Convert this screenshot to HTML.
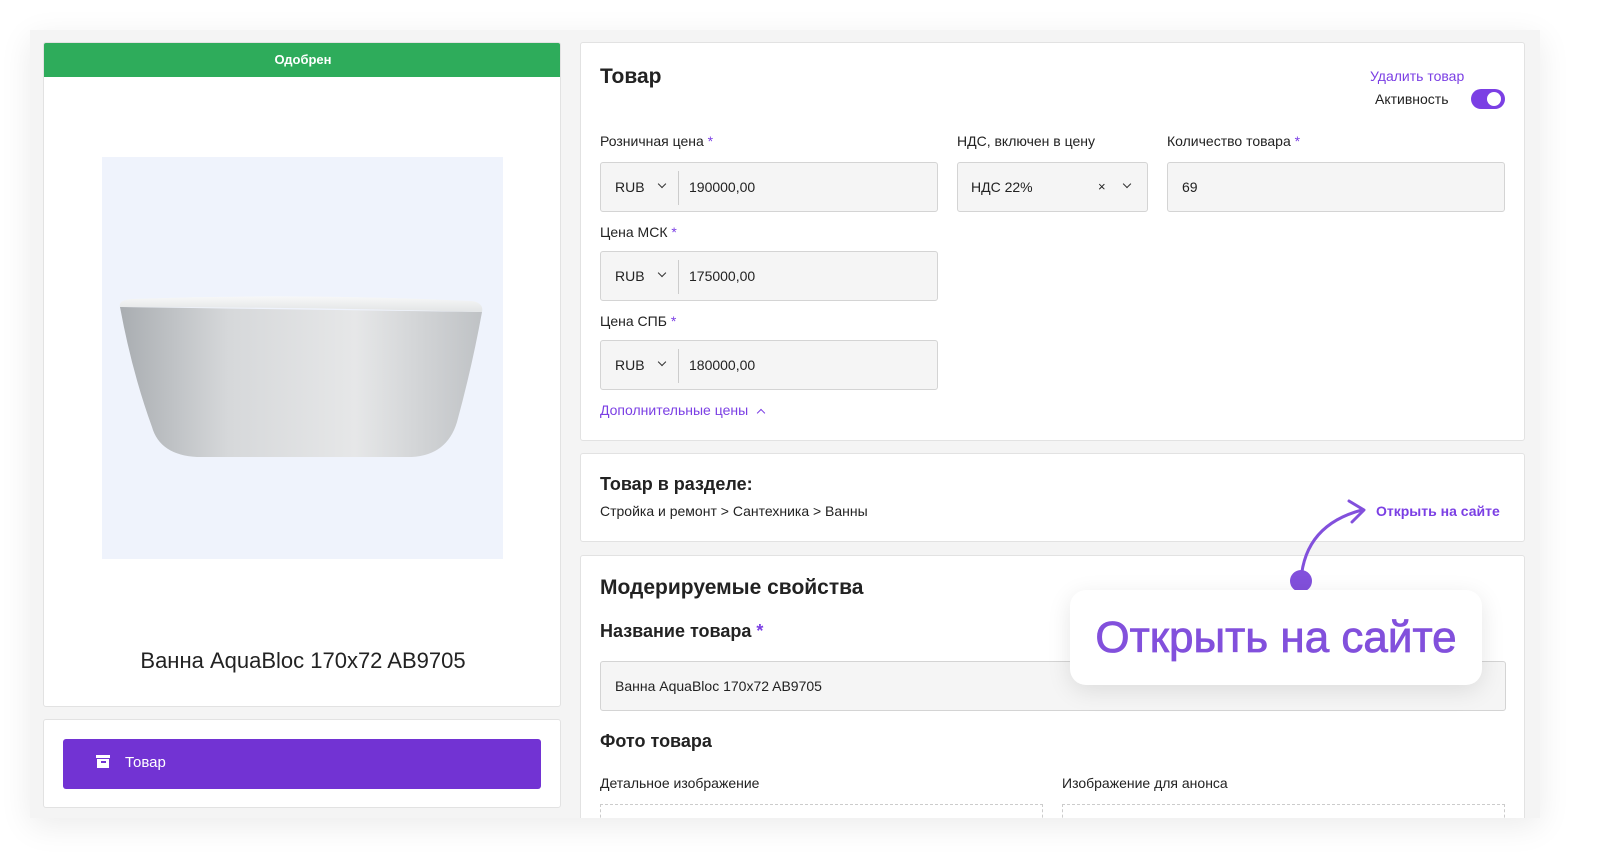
<!DOCTYPE html>
<html><head><meta charset="utf-8"><style>
*{box-sizing:border-box;margin:0;padding:0}
body{width:1600px;height:868px;background:#fff;font-family:"Liberation Sans",sans-serif;color:#222;position:relative;overflow:hidden}
.win{position:absolute;left:30px;top:30px;width:1510px;height:788px;background:#f4f4f4;box-shadow:0 8px 30px rgba(0,0,0,.08);overflow:hidden}
.card{position:absolute;background:#fff;border:1px solid #e2e2e2;border-radius:3px}
.abs{position:absolute}
.lbl{position:absolute;font-size:14px;color:#222}
.req{color:#7b3fe4}
.inp{position:absolute;background:#f5f5f5;border:1px solid #d4d4d4;border-radius:3px;height:50px;font-size:14px;color:#222}
.inp span{position:absolute;top:16px}
.chev{position:absolute;top:20px;width:6px;height:6px;border-right:1.5px solid #333;border-bottom:1.5px solid #333;transform:rotate(45deg)}
.sep{position:absolute;left:77px;top:8px;width:1px;height:34px;background:#ccc}
.purple{color:#7b3fe4}
</style></head><body>
<div class="win">
  <div class="card" style="left:13px;top:12px;width:518px;height:665px;overflow:hidden">
    <div class="abs" style="left:0;top:0;width:518px;height:34px;background:#2eac5b;color:#fff;font-size:13px;font-weight:bold;text-align:center;line-height:34px">Одобрен</div>
    <div class="abs" style="left:58px;top:114px;width:401px;height:402px;background:#eff3fc">
      <svg width="401" height="402" viewBox="0 0 401 402">
        <defs>
          <linearGradient id="g" x1="0" x2="1" y1="0" y2="0">
            <stop offset="0" stop-color="#a9adb1"/><stop offset=".3" stop-color="#d6d8da"/><stop offset=".65" stop-color="#e6e7e8"/><stop offset="1" stop-color="#bfc2c5"/>
          </linearGradient>
          <linearGradient id="r" x1="0" x2="0" y1="0" y2="1">
            <stop offset="0" stop-color="#f7f8f8"/><stop offset="1" stop-color="#e2e4e5"/>
          </linearGradient>
        </defs>
        <path d="M18 150 Q30 215 50 270 Q58 298 95 300 L310 300 Q345 298 355 265 Q370 210 380 155 Z" fill="url(#g)"/>
        <path d="M18 150 Q16 143 30 142 Q200 136 370 144 Q382 146 380 155 Q200 150 18 150 Z" fill="url(#r)"/>
      </svg>
    </div>
    <div class="abs" style="left:0;top:605px;width:518px;text-align:center;font-size:22px;color:#222">Ванна AquaBloc 170x72 AB9705</div>
  </div>
  <div class="card" style="left:13px;top:689px;width:518px;height:89px">
    <div class="abs" style="left:19px;top:19px;width:478px;height:50px;background:#7233d3;border-radius:3px;color:#fff;font-size:15px">
      <div class="abs" style="left:33px;top:16px;width:14px;height:3px;background:#fff"></div>
      <div class="abs" style="left:34px;top:20px;width:12px;height:9px;background:#fff"></div>
      <div class="abs" style="left:38px;top:22px;width:5px;height:1.5px;background:#7233d3"></div>
      <span class="abs" style="left:62px;top:15px">Товар</span>
    </div>
  </div>

  <div class="card" style="left:550px;top:12px;width:945px;height:399px">
    <div class="abs" style="left:19px;top:22px;font-size:21px;font-weight:bold">Товар</div>
    <div class="abs purple" style="left:789px;top:25px;font-size:14px">Удалить товар</div>
    <div class="abs" style="left:794px;top:48px;font-size:14px">Активность</div>
    <div class="abs" style="left:890px;top:46px;width:34px;height:20px;background:#7b3fe4;border-radius:10px"><div class="abs" style="left:16px;top:3px;width:14px;height:14px;background:#fff;border-radius:50%"></div></div>
    <div class="lbl" style="left:19px;top:90px">Розничная цена <span class="req">*</span></div>
    <div class="lbl" style="left:376px;top:90px">НДС, включен в цену</div>
    <div class="lbl" style="left:586px;top:90px">Количество товара <span class="req">*</span></div>
    <div class="inp" style="left:19px;top:119px;width:338px"><span style="left:14px">RUB</span><div class="chev" style="left:58px;top:18px"></div><div class="sep"></div><span style="left:88px">190000,00</span></div>
    <div class="inp" style="left:376px;top:119px;width:191px"><span style="left:13px">НДС 22%</span><span style="left:140px;font-size:13px">×</span><div class="chev" style="left:166px;top:18px"></div></div>
    <div class="inp" style="left:586px;top:119px;width:338px"><span style="left:14px">69</span></div>
    <div class="lbl" style="left:19px;top:181px">Цена МСК <span class="req">*</span></div>
    <div class="inp" style="left:19px;top:208px;width:338px"><span style="left:14px">RUB</span><div class="chev" style="left:58px;top:18px"></div><div class="sep"></div><span style="left:88px">175000,00</span></div>
    <div class="lbl" style="left:19px;top:270px">Цена СПБ <span class="req">*</span></div>
    <div class="inp" style="left:19px;top:297px;width:338px"><span style="left:14px">RUB</span><div class="chev" style="left:58px;top:18px"></div><div class="sep"></div><span style="left:88px">180000,00</span></div>
    <div class="abs purple" style="left:19px;top:359px;font-size:14px">Дополнительные цены <span style="display:inline-block;width:6px;height:6px;border-left:1.5px solid #7b3fe4;border-top:1.5px solid #7b3fe4;transform:rotate(45deg);margin-left:6px;position:relative;top:1px"></span></div>
  </div>

  <div class="card" style="left:550px;top:423px;width:945px;height:89px">
    <div class="abs" style="left:19px;top:20px;font-size:18px;font-weight:bold">Товар в разделе:</div>
    <div class="abs" style="left:19px;top:49px;font-size:14px">Стройка и ремонт &gt; Сантехника &gt; Ванны</div>
    <div class="abs purple" style="left:795px;top:49px;font-size:14px;font-weight:bold">Открыть на сайте</div>
  </div>

  <div class="card" style="left:550px;top:525px;width:945px;height:300px">
    <div class="abs" style="left:19px;top:20px;font-size:21px;font-weight:bold">Модерируемые свойства</div>
    <div class="abs" style="left:19px;top:65px;font-size:18px;font-weight:bold">Название товара <span class="req">*</span></div>
    <div class="inp" style="left:19px;top:105px;width:906px"><span style="left:14px">Ванна AquaBloc 170x72 AB9705</span></div>
    <div class="abs" style="left:19px;top:175px;font-size:18px;font-weight:bold">Фото товара</div>
    <div class="lbl" style="left:19px;top:219px">Детальное изображение</div>
    <div class="lbl" style="left:481px;top:219px">Изображение для анонса</div>
    <div class="abs" style="left:19px;top:248px;width:443px;height:40px;border:1px dashed #ccc"></div>
    <div class="abs" style="left:481px;top:248px;width:443px;height:40px;border:1px dashed #ccc"></div>
  </div>
</div>

<svg class="abs" style="left:1280px;top:495px" width="100" height="100" viewBox="0 0 100 100">
  <path d="M21 85 Q25 30 82 15" fill="none" stroke="#8250dc" stroke-width="3" stroke-linecap="round"/>
  <path d="M69 6 L84 15 L72 27" fill="none" stroke="#8250dc" stroke-width="3" stroke-linecap="round" stroke-linejoin="round"/>
  <circle cx="21" cy="86" r="11" fill="#8250dc"/>
</svg>
<div class="abs" style="left:1070px;top:590px;width:412px;height:95px;background:#fff;border-radius:16px;box-shadow:0 6px 24px rgba(0,0,0,.10);color:#8250dc;font-size:44px;text-align:center;line-height:95px;-webkit-text-stroke:0.8px #8250dc">Открыть на сайте</div>
</body></html>
